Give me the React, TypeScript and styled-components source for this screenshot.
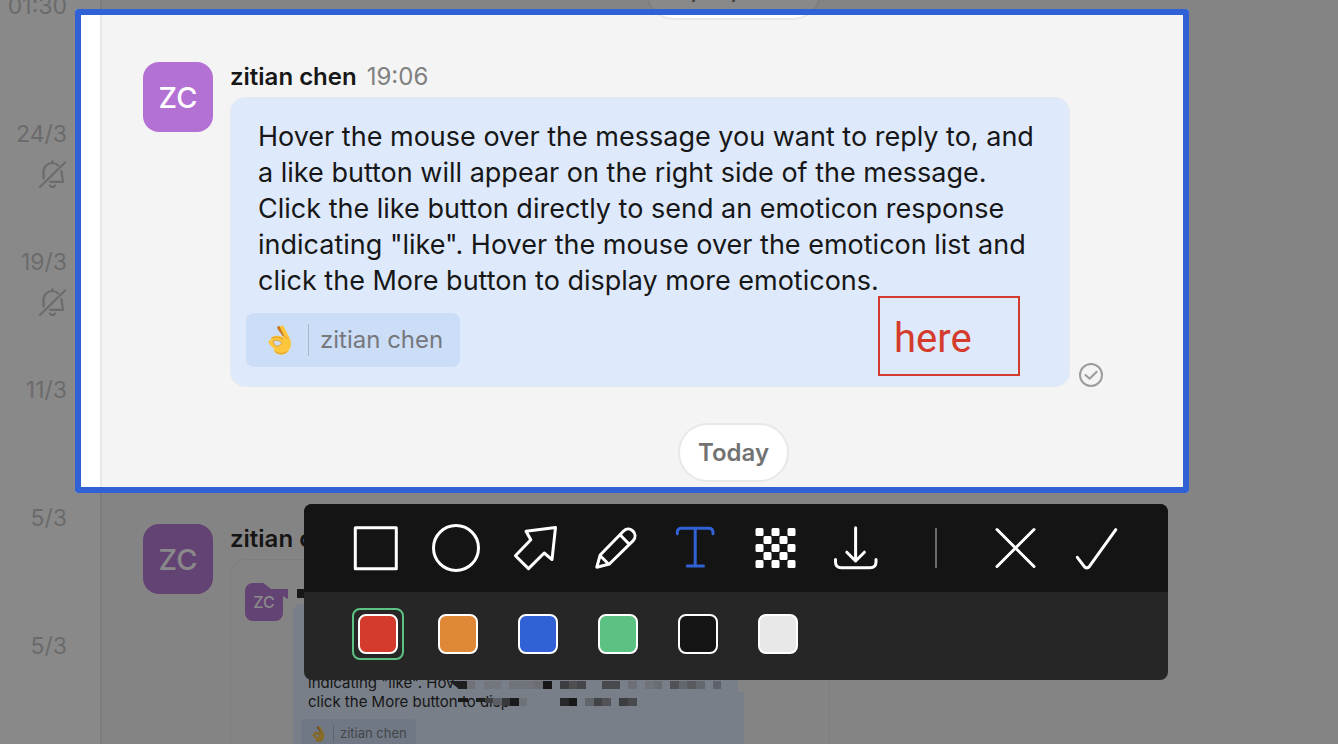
import React from "react";
import styled, { createGlobalStyle } from "styled-components";

const BLUE = "#3061d5";
const RED = "#d43b2c";

const GlobalStyle = createGlobalStyle`
  * { box-sizing: border-box; }
  body { margin: 0; font-family: Inter, "Liberation Sans", sans-serif; color: #171717; }
`;

const Page = styled.div`
  position: relative;
  display: flex;
  height: 100vh;
  overflow: hidden;
  background: #f4f4f4;
`;

/* Conversation list */
const Sidebar = styled.ul`
  flex: none;
  width: 102px;
  margin: -10px 0 0;
  padding: 0 33px 0 0;
  list-style: none;
  background: #ffffff;
  border-right: 2px solid #e8e8e8;
`;

const SidebarRow = styled.li`
  display: flex;
  flex-direction: column;
  align-items: flex-end;
  gap: 10px;
  height: 128px;
  color: #c2c2c2;
`;

const SidebarTime = styled.time`
  font-size: 23px;
  line-height: 32px;
`;

/* Chat */
const Chat = styled.main`
  flex: 1;
  min-width: 0;
  display: flex;
  flex-direction: column;
  align-items: stretch;
  margin-top: -39px;
  padding: 0 14px 0 41px;
`;

const DatePill = styled.div`
  align-self: center;
  flex: none;
  padding: 0 18px;
  font-size: 24px;
  font-weight: 600;
  line-height: 55px;
  color: #737373;
  background: #ffffff;
  border: 2px solid #e8e8e8;
  border-radius: 30px;
`;

const Message = styled.article`
  flex: none;
  display: flex;
  gap: 17px;
  margin: 42px 0 36px;
`;

const Avatar = styled.div<{ $small?: boolean }>`
  flex: none;
  width: ${(p) => (p.$small ? 38 : 70)}px;
  height: ${(p) => (p.$small ? 38 : 70)}px;
  border-radius: ${(p) => (p.$small ? 8 : 16)}px;
  background: #b371d4;
  color: #ffffff;
  font-size: ${(p) => (p.$small ? 16 : 29)}px;
  line-height: ${(p) => (p.$small ? 38 : 72)}px;
  font-weight: 500;
  text-align: center;
`;

const MessageBody = styled.div`
  display: flex;
  flex-direction: column;
  align-items: flex-start;
  min-width: 0;
`;

const Author = styled.header`
  display: flex;
  gap: 10px;
  height: 35px;
  font-size: 24px;
  line-height: 30px;
  color: #808080;

  strong {
    font-weight: 600;
    color: #171717;
  }
`;

const BubbleRow = styled.div`
  display: flex;
  align-items: flex-end;
  gap: 9px;
`;

const Bubble = styled.div`
  width: 840px;
  padding: 21px 27px 19px 15px;
  background: #deeafc;
  border: 1px solid #e4e9f0;
  border-radius: 15px;
`;

const BubbleText = styled.p`
  margin: 0 0 14px;
  padding-left: 12px;
  font-size: 27px;
  line-height: 36px;
  white-space: pre;
`;

const Reaction = styled.div<{ $small?: boolean }>`
  display: inline-flex;
  align-items: center;
  vertical-align: top;
  gap: ${(p) => (p.$small ? 6 : 11)}px;
  height: ${(p) => (p.$small ? 29 : 54)}px;
  line-height: ${(p) => (p.$small ? 29 : 56)}px;
  padding: 0 ${(p) => (p.$small ? "9px 0 11px" : "17px 0 22px")};
  border-radius: ${(p) => (p.$small ? 4 : 8)}px;
  background: #ccddf8;
  color: #76787c;
  font-size: ${(p) => (p.$small ? 13 : 24)}px;
`;

const ReactionRule = styled.span<{ $small?: boolean }>`
  width: 1px;
  height: ${(p) => (p.$small ? 17 : 32)}px;
  margin-left: ${(p) => (p.$small ? 2 : 5)}px;
  background: #a9b6cc;
`;

const ReadMark = styled.svg`
  flex: none;
`;

/* Picture attached to the second message */
const Attachment = styled.figure`
  position: relative;
  display: flex;
  align-items: flex-start;
  gap: 10px;
  width: 600px;
  height: 320px;
  margin: 0;
  padding: 23px 14px;
  border: 1px solid #e8e8e8;
  border-radius: 15px;
`;

const SmallBubble = styled.div`
  width: 451px;
  height: 220px;
  margin-top: 21px;
  padding: 69px 8px 0;
  background: #deeafc;
  border-radius: 8px;
`;

const SmallText = styled.p`
  margin: 0 0 8px;
  padding-left: 7px;
  font-size: 15px;
  line-height: 19px;
  white-space: pre;
`;

const Mosaic = styled.svg`
  position: absolute;
  left: 0;
  top: 0;
`;

/* Capture area: everything outside of it is dimmed */
const Selection = styled.section`
  position: absolute;
  top: 9px;
  left: 75px;
  right: 149px;
  height: 484px;
  border: 6px solid ${BLUE};
  border-radius: 3px;
  box-shadow: 0 0 0 3000px rgba(20, 20, 20, 0.5);
`;

const Note = styled.input`
  position: absolute;
  top: 281px;
  left: 797px;
  width: 142px;
  height: 80px;
  padding: 4px 14px 0;
  border: 2px solid ${RED};
  border-radius: 0;
  outline: none;
  background: transparent;
  color: ${RED};
  font-family: Roboto, "Liberation Sans", sans-serif;
  font-size: 40px;
`;

const Toolbar = styled.div`
  position: absolute;
  top: 504px;
  right: 170px;
  width: 864px;
  border-radius: 8px;
  overflow: hidden;
  background: #262626;
`;

const ToolRow = styled.div`
  display: flex;
  height: 88px;
  padding: 0 32px;
  background: #141414;
`;

const ToolButton = styled.button<{ $active?: boolean }>`
  display: grid;
  place-items: center;
  width: 80px;
  padding: 0;
  border: 0;
  background: none;
  color: ${(p) => (p.$active ? BLUE : "#ffffff")};
`;

const ToolDivider = styled.span`
  align-self: center;
  width: 2px;
  height: 40px;
  margin: 0 39px;
  background: #6b6b6b;
`;

const SwatchRow = styled.fieldset`
  display: flex;
  gap: 28px;
  height: 88px;
  margin: 0;
  padding: 16px 48px 20px;
  border: 0;
`;

const SwatchFrame = styled.label`
  display: grid;
  place-items: center;
  width: 52px;
  height: 52px;
  border: 2px solid transparent;
  border-radius: 8px;

  &:has(input:checked) {
    border-color: #5cc283;
  }
`;

const Swatch = styled.input<{ $color: string }>`
  appearance: none;
  width: 40px;
  height: 40px;
  margin: 0;
  border: 2px solid #ffffff;
  border-radius: 8px;
  background: ${(p) => p.$color};
`;

const ToolIcon = ({ children }: { children: React.ReactNode }) => (
  <svg
    width="48"
    height="48"
    viewBox="0 0 48 48"
    fill="none"
    stroke="currentColor"
    strokeWidth="3"
    strokeLinecap="round"
    strokeLinejoin="round"
    aria-hidden="true"
  >
    {children}
  </svg>
);

const checkerCells = Array.from({ length: 25 }, (_, i) => i).filter((i) => i % 2 === 0);

const tools = [
  { name: "Rectangle", icon: <rect x="3.3" y="3.8" width="41" height="41" /> },
  { name: "Ellipse", icon: <circle cx="24" cy="24" r="22.5" /> },
  {
    name: "Arrow",
    icon: <path d="M14 7.2 43.5 3.6 40 35.6 32.2 29 16.5 44.6 3.4 31.8 18.8 15.8Z" />,
  },
  {
    name: "Pencil",
    icon: (
      <path d="M4.8 43.2 8.2 31 31.6 7C38 1 47 10 41.2 16.6L17.4 40ZM28 10.8 37 20M9 32.5 16 39.5M4.8 43.2 17.4 40" />
    ),
  },
  {
    name: "Text",
    active: true,
    icon: <path d="M5.3 9.7V8.5Q5.3 4.3 9.5 4.3H36.8Q41 4.3 41 8.5V9.7M23.2 4.3V42M15.2 42H31.5" />,
  },
  {
    name: "Mosaic",
    icon: (
      <g fill="currentColor" stroke="none">
        {checkerCells.map((i) => (
          <rect
            key={i}
            x={3.5 + (i % 5) * 8}
            y={4 + Math.floor(i / 5) * 8}
            width="8"
            height="8"
            rx="1.5"
          />
        ))}
      </g>
    ),
  },
  {
    name: "Save",
    icon: (
      <path d="M23.6 3.7V37M14.8 28.2 23.6 37 32.4 28.2M3.5 35.5V38Q3.5 43.8 9.5 43.8H38Q44 43.8 44 38V35.5" />
    ),
  },
];

const colors = [
  { name: "Red", value: "#d43b2c" },
  { name: "Orange", value: "#df8936" },
  { name: "Blue", value: "#3061d5" },
  { name: "Green", value: "#5cc283" },
  { name: "Black", value: "#141414" },
  { name: "Light grey", value: "#e8e8e8" },
];

const MutedIcon = () => (
  <svg
    width="28"
    height="28"
    viewBox="0 0 28 28"
    fill="none"
    stroke="currentColor"
    strokeWidth="2.2"
    strokeLinecap="round"
    strokeLinejoin="round"
    role="img"
    aria-label="Muted"
  >
    <path d="M1 27 26 2.5M4.5 18.6V11.8C4.6 6.5 8.5 3 13.4 3 15.8 3 17.8 4 19.3 5.3M13.4 1.2V3M22.4 11 24 21.8H11.3M11 25.5C11.8 27.6 15.1 27.6 16 25.5" />
  </svg>
);

const OkHand = ({ width, height }: { width: number; height: number }) => (
  <svg width={width} height={height} viewBox="0 0 24 30" role="img" aria-label="OK hand">
    <path
      d="M9.4 1.6C10.2.6 11.7.9 12.5 2L17 8.3 15.4 12 9.8 4.4C9.1 3.4 8.8 2.4 9.4 1.6Z"
      fill="#c97a22"
    />
    <path
      d="M12.8.8C13.8 0 15.3.4 16.1 1.9L21.5 12.8C24.2 17.5 23 23.5 19.4 27.3 16.5 30.3 10.5 30.6 7.2 27.5 6.2 26.4 6.2 24.8 5.6 23.2 4.3 21.8 1 19.8.5 17.2.2 15.5 1.8 14.7 3 15.4 2.7 13.5 3.6 11.7 6 11.2 9 10.5 12 10.7 14.6 12L16 10.3 12.4 3.2C11.9 2.2 12 1.3 12.8.8Z"
      fill="#fcc63d"
    />
    <path
      d="M5.2 16C7.5 14.6 11.5 15.5 13.8 17.5 12.8 20 10.4 21.5 7.8 21 6.5 19.8 5.4 18 5.2 16Z"
      fill="#ccddf8"
      stroke="#dc9427"
      strokeWidth=".8"
    />
    <path
      d="M4 12.8C7 11.5 11.5 12 14.8 14.2M16 10.3C16.8 12 18 13 19.2 13.2M7.4 26.8C10.5 29.4 16 29.3 19 26.5"
      fill="none"
      stroke="#e39b28"
      strokeWidth="1"
      strokeLinecap="round"
    />
  </svg>
);

/* [x, y, width, height, colour] of each block of the pixelated lines */
const blocks: [number, number, number, number, string][] = [
  [227, 121, 9, 8, "#2a2a2c"],
  [236, 121, 8, 8, "#cdd1dc"],
  [253, 121, 17, 8, "#d3d9e4"],
  [278, 121, 25, 8, "#ccd2df"],
  [303, 121, 9, 8, "#c5c8d3"],
  [312, 121, 9, 8, "#1c1718"],
  [329, 121, 9, 8, "#64676e"],
  [338, 121, 8, 8, "#8a8b90"],
  [346, 121, 9, 8, "#76787f"],
  [371, 121, 18, 8, "#7d8088"],
  [397, 121, 9, 8, "#c4cad7"],
  [414, 121, 9, 8, "#cdd2de"],
  [423, 121, 8, 8, "#c2c6d4"],
  [439, 121, 9, 8, "#8d9198"],
  [448, 121, 8, 8, "#b2bbc8"],
  [456, 121, 9, 8, "#9da1a6"],
  [465, 121, 9, 8, "#b2b9c6"],
  [482, 121, 8, 8, "#a6aebf"],
  [227, 138, 10, 4, "#1f1f20"],
  [245, 138, 9, 4, "#2b2b2c"],
  [254, 138, 8, 5, "#666a70"],
  [262, 138, 9, 7, "#a4aab8"],
  [271, 138, 8, 8, "#5b5e62"],
  [279, 138, 9, 8, "#1f2023"],
  [288, 138, 8, 8, "#cbd3df"],
  [329, 138, 9, 8, "#3b3c3e"],
  [338, 138, 8, 8, "#1c1c1c"],
  [354, 138, 9, 8, "#adb5c3"],
  [363, 138, 8, 8, "#6e737b"],
  [371, 138, 9, 8, "#8f9298"],
  [388, 138, 9, 8, "#64676c"],
  [397, 138, 9, 8, "#7d8085"],
];

const messageText = `Hover the mouse over the message you want to reply to, and
a like button will appear on the right side of the message.
Click the like button directly to send an emoticon response
indicating "like". Hover the mouse over the emoticon list and
click the More button to display more emoticons.`;

const conversations = [
  { time: "01:30" },
  { time: "24/3", muted: true },
  { time: "19/3", muted: true },
  { time: "11/3" },
  { time: "5/3" },
  { time: "5/3" },
];

export default function App() {
  return (
    <Page>
      <GlobalStyle />
      <Sidebar>
        {conversations.map((c, i) => (
          <SidebarRow key={i}>
            <SidebarTime>{c.time}</SidebarTime>
            {c.muted && <MutedIcon />}
          </SidebarRow>
        ))}
      </Sidebar>

      <Chat>
        <DatePill>10/03/2025</DatePill>
        <Message>
          <Avatar>ZC</Avatar>
          <MessageBody>
            <Author>
              <strong>zitian chen</strong>
              <time>19:06</time>
            </Author>
            <BubbleRow>
              <Bubble>
                <BubbleText>{messageText}</BubbleText>
                <Reaction>
                  <OkHand width={24} height={30} />
                  <ReactionRule />
                  zitian chen
                </Reaction>
              </Bubble>
              <ReadMark
                width="24"
                height="24"
                viewBox="0 0 24 24"
                fill="none"
                stroke="#9c9c9c"
                strokeWidth="2"
                strokeLinecap="round"
                strokeLinejoin="round"
                role="img"
                aria-label="Read"
              >
                <circle cx="12" cy="12" r="11" />
                <path d="M6.5 12 10.6 15.8 17.7 8.7" />
              </ReadMark>
            </BubbleRow>
          </MessageBody>
        </Message>

        <DatePill>Today</DatePill>
        <Message>
          <Avatar>ZC</Avatar>
          <MessageBody>
            <Author>
              <strong>zitian chen</strong>
            </Author>
            <Attachment>
              <Avatar $small>ZC</Avatar>
              <SmallBubble>
                <SmallText>{`indicating "like". Hov\nclick the More button to disp`}</SmallText>
                <Reaction $small>
                  <OkHand width={13} height={16} />
                  <ReactionRule $small />
                  zitian chen
                </Reaction>
              </SmallBubble>
              <Mosaic width="598" height="184" aria-hidden="true">
                <path d="M31 22H54V29H40Z" fill="#f4f4f4" />
                <path d="M38 29H57V39L50 35Z" fill="#b371d4" />
                <rect x="66" y="29" width="8" height="9" fill="#1c1c1c" />
                <rect x="507" y="44" width="6" height="88" fill="#f4f4f4" />
                <path d="M218 121H228V129Z" fill="#2a2a2c" />
                {blocks.map(([x, y, w, h, fill]) => (
                  <rect key={`${x}-${y}`} x={x} y={y} width={w} height={h} fill={fill} />
                ))}
              </Mosaic>
            </Attachment>
          </MessageBody>
        </Message>
      </Chat>

      <Selection aria-label="Capture area">
        <Note aria-label="Text note" defaultValue="here" />
      </Selection>

      <Toolbar>
        <ToolRow>
          {tools.map((t) => (
            <ToolButton key={t.name} type="button" aria-label={t.name} $active={t.active}>
              <ToolIcon>{t.icon}</ToolIcon>
            </ToolButton>
          ))}
          <ToolDivider />
          <ToolButton type="button" aria-label="Cancel">
            <ToolIcon>
              <path d="M5 5.5 42 42.5M42 5.5 5 42.5" />
            </ToolIcon>
          </ToolButton>
          <ToolButton type="button" aria-label="Done">
            <ToolIcon>
              <path d="M5.3 33.3 12 42.2Q14.8 45.6 17.6 42.2L43.8 5.7" />
            </ToolIcon>
          </ToolButton>
        </ToolRow>
        <SwatchRow aria-label="Colour">
          {colors.map((c, i) => (
            <SwatchFrame key={c.name}>
              <Swatch
                type="radio"
                name="colour"
                aria-label={c.name}
                defaultChecked={i === 0}
                $color={c.value}
              />
            </SwatchFrame>
          ))}
        </SwatchRow>
      </Toolbar>
    </Page>
  );
}
